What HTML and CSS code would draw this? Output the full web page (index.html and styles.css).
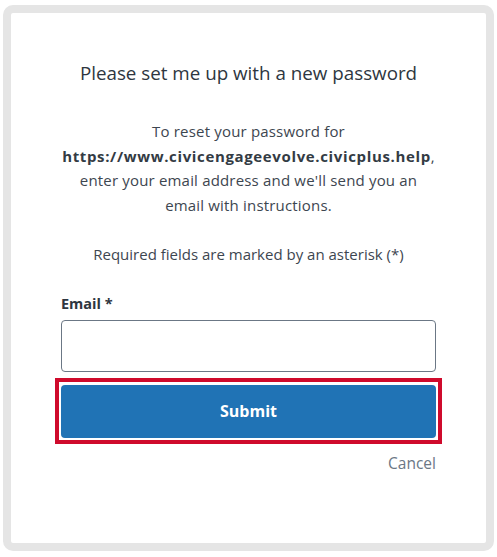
FILE: index.html
```html
<!DOCTYPE html>
<html>
<head>
<meta charset="utf-8">
<link rel="stylesheet" href="styles.css">
</head>
<body>
<div class="frame">
  <div class="card">
    <h1 class="title">Please set me up with a new password</h1>
    <p class="intro">To reset your password for <strong>https://www.civicengageevolve.civicplus.help</strong>, enter your email address and we'll send you an email with instructions.</p>
    <p class="required">Required fields are marked by an asterisk (*)</p>
    <label class="label" for="email">Email *</label>
    <input class="input" id="email" type="text">
    <div class="highlight">
      <button class="submit" type="button">Submit</button>
    </div>
    <div class="cancel-row"><a class="cancel" href="#">Cancel</a></div>
  </div>
</div>
</body>
</html>
```

FILE: styles.css
```css
html, body {
  margin: 0;
  padding: 0;
  background: #ffffff;
}
body {
  font-family: "Open Sans", "Noto Sans", sans-serif;
  color: #333b44;
}
.frame {
  box-sizing: border-box;
  width: 491px;
  height: 546px;
  margin: 5px 0 0 3px;
  border: 8px solid #e5e5e5;
  border-radius: 10px;
  background: #ffffff;
}
.card {
  display: flex;
  flex-direction: column;
  padding: 49px 50px 0 50px;
}
.title {
  margin: 0;
  font-size: 18.8px;
  font-weight: 400;
  line-height: 22px;
  text-align: center;
  color: #2e3640;
}
.intro {
  margin: 35px 0 0 0;
  font-size: 15px;
  line-height: 24.7px;
  letter-spacing: 0.18px;
  text-align: center;
  color: #3d4650;
}
.intro strong {
  font-weight: 700;
  letter-spacing: 0.64px;
  color: #333b44;
}
.required {
  margin: 24px 0 0 0;
  font-size: 15px;
  line-height: 24px;
  text-align: center;
  color: #3d4650;
}
.label {
  margin-top: 28px;
  font-size: 14.5px;
  font-weight: 700;
  line-height: 20px;
  color: #2e3640;
}
.input {
  box-sizing: border-box;
  margin: 6px 0 0 0;
  height: 52px;
  width: 100%;
  border: 1px solid #6b7785;
  border-radius: 4px;
  background: #fff;
}
.highlight {
  margin: 6px -6px 0 -6px;
  padding: 3px 2px 2px 2px;
  border: 4px solid #cf0a2c;
}
.submit {
  display: block;
  width: 100%;
  height: 53px;
  border: 0;
  border-radius: 4px;
  background: #2073b5;
  color: #ffffff;
  font-family: "Open Sans", "Noto Sans", sans-serif;
  font-size: 16px;
  font-weight: 700;
}
.cancel-row {
  display: flex;
  justify-content: flex-end;
  margin-top: 9px;
}
.cancel {
  font-size: 15.5px;
  line-height: 20px;
  color: #6b7785;
  text-decoration: none;
}
```
